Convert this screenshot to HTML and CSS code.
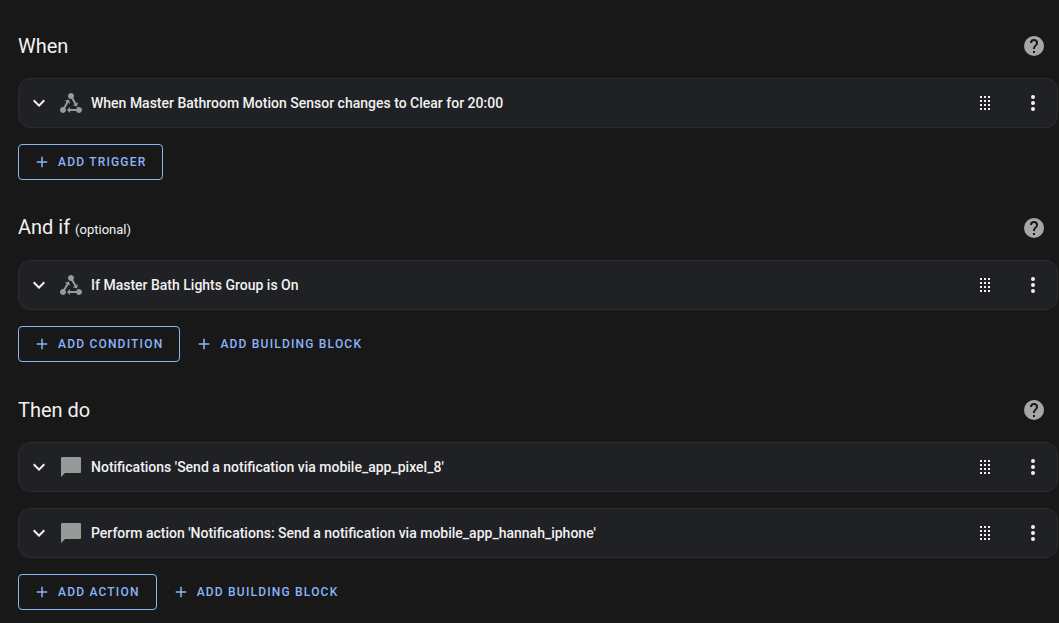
FILE: index.html
```html
<!DOCTYPE html>
<html lang="en">
<head>
    <meta charset="UTF-8">
    <meta name="viewport" content="width=device-width, initial-scale=1.0">
    <title>Automation editor</title>
    <link rel="stylesheet" href="styles.css">
</head>
<body>
    <!-- shared icons -->
    <svg class="sprite" aria-hidden="true">
        <symbol id="help" viewBox="0 0 24 24"><path d="M15.07,11.25L14.17,12.17C13.45,12.89 13,13.5 13,15H11V14.5C11,13.39 11.45,12.39 12.17,11.67L13.41,10.41C13.78,10.05 14,9.55 14,9C14,7.89 13.1,7 12,7A2,2 0 0,0 10,9H8A4,4 0 0,1 12,5A4,4 0 0,1 16,9C16,9.88 15.64,10.67 15.07,11.25M13,19H11V17H13M12,2A10,10 0 0,0 2,12A10,10 0 0,0 12,22A10,10 0 0,0 22,12C22,6.47 17.5,2 12,2Z"/></symbol>
        <symbol id="chevron" viewBox="0 0 24 24"><path d="M7.41,8.58L12,13.17L16.59,8.58L18,10L12,16L6,10L7.41,8.58Z"/></symbol>
        <symbol id="state" viewBox="0 0 24 24"><path d="M6.27 17.05C6.72 17.58 7 18.25 7 19C7 20.66 5.66 22 4 22S1 20.66 1 19 2.34 16 4 16C4.18 16 4.36 16 4.53 16.05L7.6 10.69L5.86 9.7L9.95 8.58L11.07 12.67L9.33 11.68L6.27 17.05M20 16C18.7 16 17.6 16.84 17.18 18H11V16L8 19L11 22V20H17.18C17.6 21.16 18.7 22 20 22C21.66 22 23 20.66 23 19S21.66 16 20 16M12 8C12.18 8 12.36 8 12.53 7.95L15.6 13.31L13.86 14.3L17.95 15.42L19.07 11.33L17.33 12.32L14.27 6.95C14.72 6.42 15 5.75 15 5C15 3.34 13.66 2 12 2S9 3.34 9 5 10.34 8 12 8Z"/></symbol>
        <symbol id="message" viewBox="0 0 24 24"><path d="M21,2H3A1,1 0 0,0 2,3V22L6,18H21A1,1 0 0,0 22,17V3A1,1 0 0,0 21,2Z"/></symbol>
        <symbol id="drag" viewBox="0 0 24 24"><path d="M7,19V17H9V19H7M11,19V17H13V19H11M15,19V17H17V19H15M7,15V13H9V15H7M11,15V13H13V15H11M15,15V13H17V15H15M7,11V9H9V11H7M11,11V9H13V11H11M15,11V9H17V11H15M7,7V5H9V7H7M11,7V5H13V7H11M15,7V5H17V7H15Z"/></symbol>
        <symbol id="dots" viewBox="0 0 24 24"><path d="M12,16A2,2 0 0,1 14,18A2,2 0 0,1 12,20A2,2 0 0,1 10,18A2,2 0 0,1 12,16M12,10A2,2 0 0,1 14,12A2,2 0 0,1 12,14A2,2 0 0,1 10,12A2,2 0 0,1 12,10M12,4A2,2 0 0,1 14,6A2,2 0 0,1 12,8A2,2 0 0,1 10,6A2,2 0 0,1 12,4Z"/></symbol>
        <symbol id="plus" viewBox="0 0 24 24"><path d="M19,13H13V19H11V13H5V11H11V5H13V11H19V13Z"/></symbol>
    </svg>

    <main class="editor">
        <section class="section">
            <div class="header">
                <h2>When</h2>
                <button class="icon-button help" aria-label="Help"><svg class="icon"><use href="#help"/></svg></button>
            </div>
            <div class="rows">
                <div class="card">
                    <button class="expand" aria-label="Expand"><svg class="icon"><use href="#chevron"/></svg></button>
                    <svg class="icon type"><use href="#state"/></svg>
                    <h3>When Master Bathroom Motion Sensor changes to Clear for 20:00</h3>
                    <button class="icon-button" aria-label="Move"><svg class="icon"><use href="#drag"/></svg></button>
                    <button class="icon-button" aria-label="Menu"><svg class="icon"><use href="#dots"/></svg></button>
                </div>
            </div>
            <div class="buttons">
                <button class="btn outlined"><svg class="plus"><use href="#plus"/></svg>ADD TRIGGER</button>
            </div>
        </section>

        <section class="section">
            <div class="header">
                <h2>And if <span class="small">(optional)</span></h2>
                <button class="icon-button help" aria-label="Help"><svg class="icon"><use href="#help"/></svg></button>
            </div>
            <div class="rows">
                <div class="card">
                    <button class="expand" aria-label="Expand"><svg class="icon"><use href="#chevron"/></svg></button>
                    <svg class="icon type"><use href="#state"/></svg>
                    <h3>If Master Bath Lights Group is On</h3>
                    <button class="icon-button" aria-label="Move"><svg class="icon"><use href="#drag"/></svg></button>
                    <button class="icon-button" aria-label="Menu"><svg class="icon"><use href="#dots"/></svg></button>
                </div>
            </div>
            <div class="buttons">
                <button class="btn outlined"><svg class="plus"><use href="#plus"/></svg>ADD CONDITION</button>
                <button class="btn"><svg class="plus"><use href="#plus"/></svg>ADD BUILDING BLOCK</button>
            </div>
        </section>

        <section class="section">
            <div class="header">
                <h2>Then do</h2>
                <button class="icon-button help" aria-label="Help"><svg class="icon"><use href="#help"/></svg></button>
            </div>
            <div class="rows">
                <div class="card">
                    <button class="expand" aria-label="Expand"><svg class="icon"><use href="#chevron"/></svg></button>
                    <svg class="icon type"><use href="#message"/></svg>
                    <h3>Notifications 'Send a notification via mobile_app_pixel_8'</h3>
                    <button class="icon-button" aria-label="Move"><svg class="icon"><use href="#drag"/></svg></button>
                    <button class="icon-button" aria-label="Menu"><svg class="icon"><use href="#dots"/></svg></button>
                </div>
                <div class="card">
                    <button class="expand" aria-label="Expand"><svg class="icon"><use href="#chevron"/></svg></button>
                    <svg class="icon type"><use href="#message"/></svg>
                    <h3>Perform action 'Notifications: Send a notification via mobile_app_hannah_iphone'</h3>
                    <button class="icon-button" aria-label="Move"><svg class="icon"><use href="#drag"/></svg></button>
                    <button class="icon-button" aria-label="Menu"><svg class="icon"><use href="#dots"/></svg></button>
                </div>
            </div>
            <div class="buttons">
                <button class="btn outlined"><svg class="plus"><use href="#plus"/></svg>ADD ACTION</button>
                <button class="btn"><svg class="plus"><use href="#plus"/></svg>ADD BUILDING BLOCK</button>
            </div>
        </section>
    </main>
</body>
</html>
```
FILE: styles.css
```css
body {
    margin: 0;
    background-color: #181818;
    color: #f1f1f1;
    font-family: Roboto, "Liberation Sans", sans-serif;
}
.sprite {
    display: none;
}
.editor {
    display: flex;
    flex-direction: column;
    gap: 24px;
    padding: 22px 1px 12px 18px;
}
.header {
    display: flex;
    align-items: center;
    justify-content: space-between;
    margin-bottom: 8px;
}
h2 {
    margin: 0;
    font-size: 20px;
    font-weight: 400;
    line-height: 24px;
}
.small {
    font-size: 13px;
}
button {
    margin: 0;
    border: 0;
    padding: 0;
    background: none;
    color: inherit;
    font-family: inherit;
    cursor: pointer;
}
.icon {
    display: block;
    flex: none;
    width: 24px;
    height: 24px;
    fill: currentColor;
}
.icon-button {
    display: flex;
    flex: none;
    align-items: center;
    justify-content: center;
    width: 48px;
    height: 48px;
}
.help {
    color: #a6a6a6;
}
.rows {
    display: flex;
    flex-direction: column;
    gap: 16px;
}
.card {
    display: flex;
    align-items: center;
    padding-left: 8px;
    border: 1px solid #2b2c2f;
    border-radius: 12px;
    background-color: #202124;
}
.type {
    margin: 0 8px;
    color: #989a99;
}
h3 {
    flex: 1;
    margin: 0;
    padding-bottom: 1px;
    font-size: 14px;
    font-weight: 500;
    line-height: 20px;
}
.buttons {
    display: flex;
    margin-top: 16px;
}
.btn {
    display: flex;
    align-items: center;
    gap: 7px;
    height: 36px;
    padding: 0 16px 0 14px;
    border: 1px solid transparent;
    border-radius: 4px;
    color: #8ab4f8;
    font-size: 12px;
    font-weight: 500;
    letter-spacing: 0.1em;
}
.outlined {
    border-color: #8ab4f8;
}
.plus {
    width: 18px;
    height: 18px;
    fill: currentColor;
}
```
